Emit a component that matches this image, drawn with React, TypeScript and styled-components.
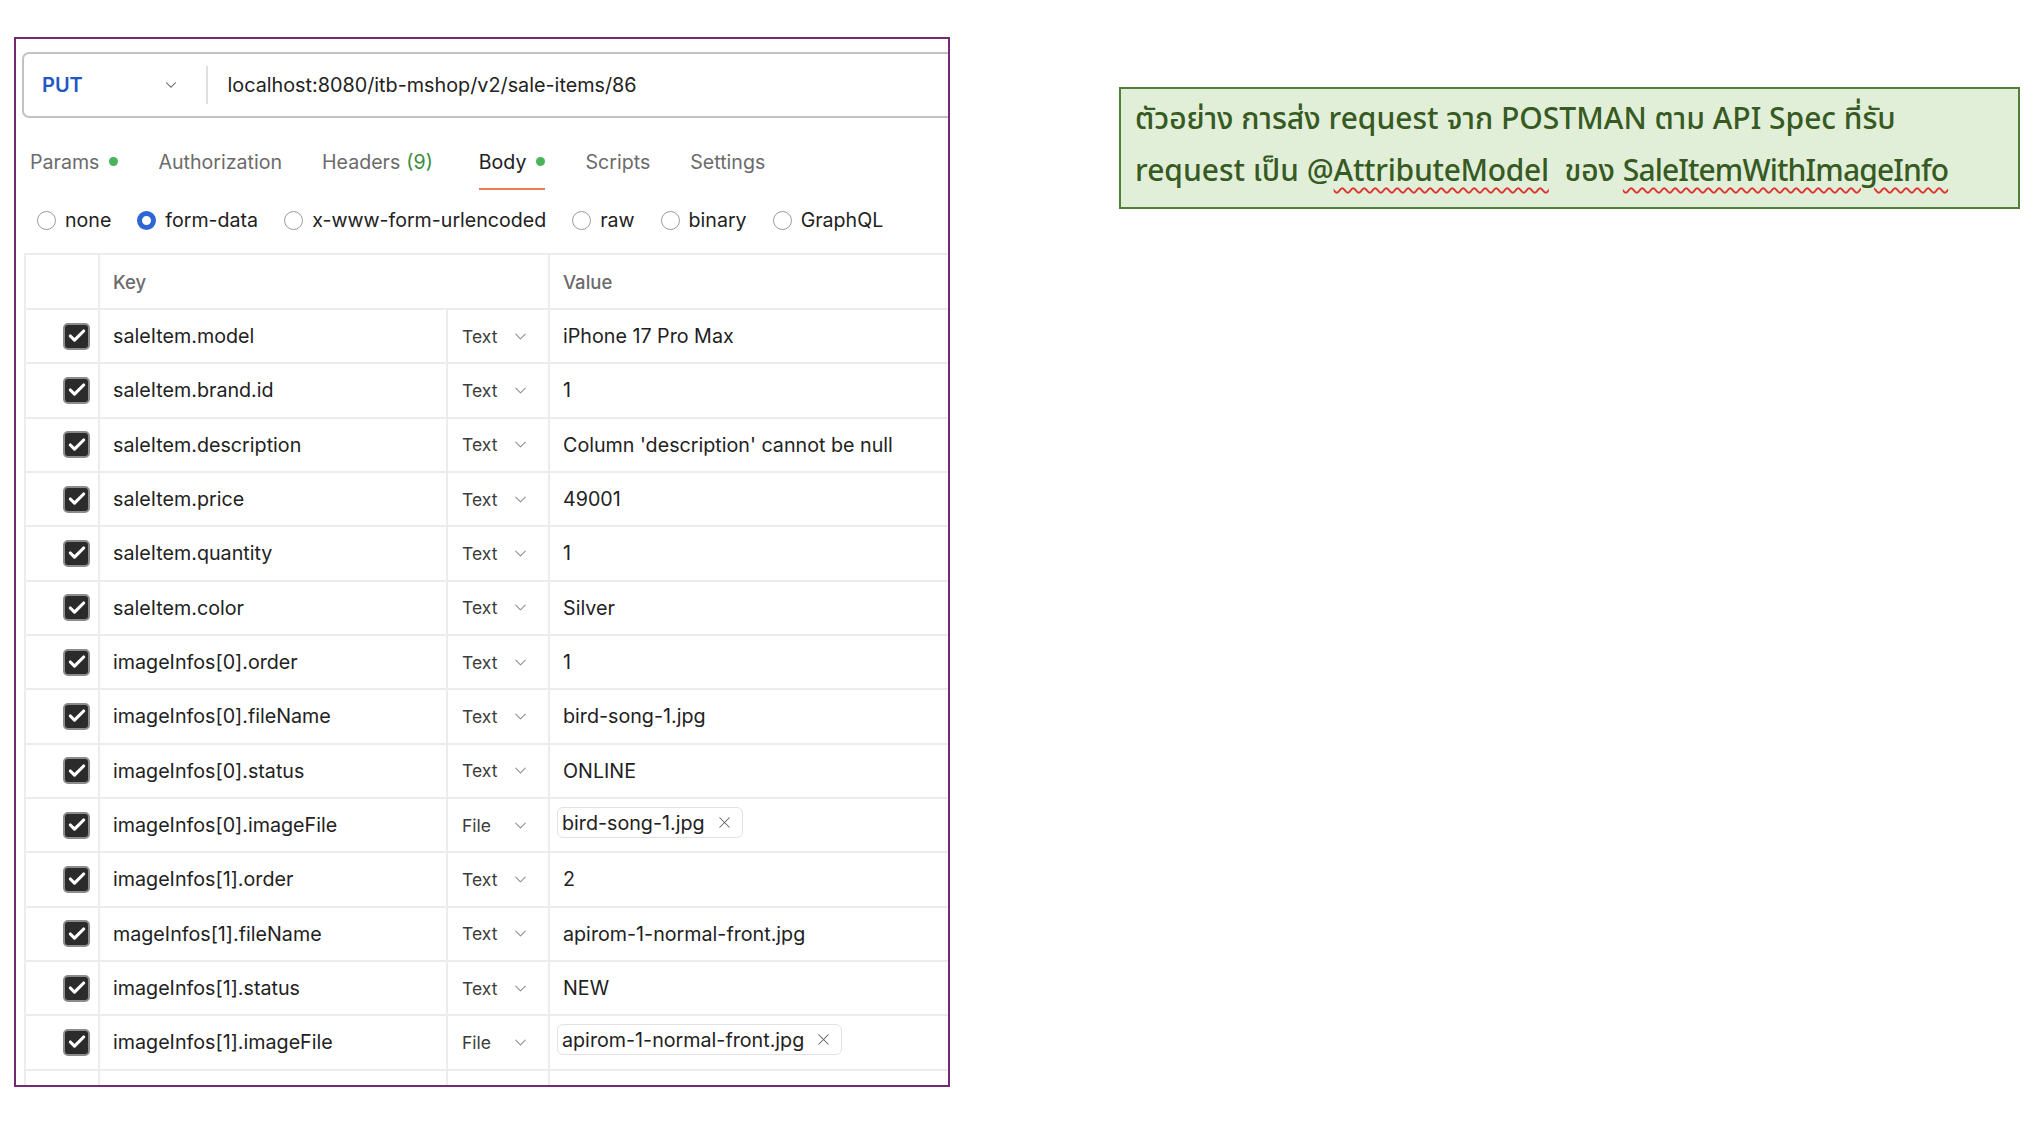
import React from 'react';
import styled, { createGlobalStyle } from 'styled-components';
import { ChevronDown, X, Check } from 'lucide-react';

type Field = { key: string; type: 'Text' | 'File'; value: string };

const FIELDS: Field[] = [
  { key: 'saleItem.model', type: 'Text', value: 'iPhone 17 Pro Max' },
  { key: 'saleItem.brand.id', type: 'Text', value: '1' },
  { key: 'saleItem.description', type: 'Text', value: "Column 'description' cannot be null" },
  { key: 'saleItem.price', type: 'Text', value: '49001' },
  { key: 'saleItem.quantity', type: 'Text', value: '1' },
  { key: 'saleItem.color', type: 'Text', value: 'Silver' },
  { key: 'imageInfos[0].order', type: 'Text', value: '1' },
  { key: 'imageInfos[0].fileName', type: 'Text', value: 'bird-song-1.jpg' },
  { key: 'imageInfos[0].status', type: 'Text', value: 'ONLINE' },
  { key: 'imageInfos[0].imageFile', type: 'File', value: 'bird-song-1.jpg' },
  { key: 'imageInfos[1].order', type: 'Text', value: '2' },
  { key: 'mageInfos[1].fileName', type: 'Text', value: 'apirom-1-normal-front.jpg' },
  { key: 'imageInfos[1].status', type: 'Text', value: 'NEW' },
  { key: 'imageInfos[1].imageFile', type: 'File', value: 'apirom-1-normal-front.jpg' },
];

const TABS = [
  { label: 'Params', dot: true },
  { label: 'Authorization' },
  { label: 'Headers', count: '(9)' },
  { label: 'Body', dot: true, active: true },
  { label: 'Scripts' },
  { label: 'Settings' },
];

const BODY_TYPES = ['none', 'form-data', 'x-www-form-urlencoded', 'raw', 'binary', 'GraphQL'];

const App: React.FC = () => {
  return (
    <>
      <GlobalStyle />
      <Page>
        <Frame>
          <UrlBar>
            <Method>
              <MethodName>PUT</MethodName>
              <ChevronDown size={18} strokeWidth={1.4} color="#555" />
            </Method>
            <UrlDivider />
            <UrlText>localhost:8080/itb-mshop/v2/sale-items/86</UrlText>
          </UrlBar>

          <Tabs>
            {TABS.map((t) => (
              <Tab key={t.label} $active={!!t.active}>
                {t.label}
                {t.count && <Count>{t.count}</Count>}
                {t.dot && <Dot />}
              </Tab>
            ))}
          </Tabs>

          <RadioRow>
            {BODY_TYPES.map((b) => (
              <RadioItem key={b}>
                <Radio $checked={b === 'form-data'} />
                {b}
              </RadioItem>
            ))}
          </RadioRow>

          <Table>
            <HeadRow>
              <Cell />
              <HeadCell>Key</HeadCell>
              <HeadCell>Value</HeadCell>
            </HeadRow>
            {FIELDS.map((f) => (
              <Row key={f.key}>
                <CheckCell>
                  <CheckBox>
                    <Check size={20} strokeWidth={3.8} color="#fff" />
                  </CheckBox>
                </CheckCell>
                <KeyCell>{f.key}</KeyCell>
                <TypeCell>
                  {f.type}
                  <ChevronDown size={19} strokeWidth={1.3} color="#8e8e8e" />
                </TypeCell>
                {f.type === 'File' ? (
                  <ValueCell $file>
                    <FileChip>
                      {f.value}
                      <X size={19} strokeWidth={1.3} color="#5e5e5e" />
                    </FileChip>
                  </ValueCell>
                ) : (
                  <ValueCell>{f.value}</ValueCell>
                )}
              </Row>
            ))}
            <Row>
              <CheckCell />
              <KeyCell />
              <TypeCell />
              <ValueCell />
            </Row>
          </Table>
        </Frame>

        <Note>
          <NoteLine>ตัวอย่าง การส่ง request จาก POSTMAN ตาม API Spec ที่รับ</NoteLine>
          <NoteLine>
            request เป็น @<Squiggle>AttributeModel</Squiggle>&nbsp;&nbsp;ของ{' '}
            <Squiggle $tight>SaleItemWithImageInfo</Squiggle>
          </NoteLine>
        </Note>
      </Page>
    </>
  );
};

const GlobalStyle = createGlobalStyle`
  html, body { margin: 0; padding: 0; background: #fff; }
  body { font-family: Inter, "Liberation Sans", sans-serif; color: #212121; }
`;

const Page = styled.div`
  display: flex;
  align-items: flex-start;
  padding: 37px 0 0 14px;
`;

const Frame = styled.div`
  width: 936px;
  height: 1050px;
  box-sizing: border-box;
  border: 2.5px solid #732a70;
  overflow: hidden;
  display: flex;
  flex-direction: column;
`;

const UrlBar = styled.div`
  margin: 13px 0 0 6px;
  width: 1100px;
  height: 66px;
  flex-shrink: 0;
  box-sizing: border-box;
  border: 2px solid #c2c2c2;
  border-radius: 7px;
  display: flex;
  align-items: center;
`;

const Method = styled.div`
  width: 182px;
  box-sizing: border-box;
  padding: 0 26px 0 18px;
  display: flex;
  align-items: center;
  justify-content: space-between;
`;

const MethodName = styled.span`
  color: #2456c4;
  font-weight: 600;
  font-size: 20px;
`;

const UrlDivider = styled.div`
  width: 1.5px;
  height: 38px;
  background: #e0e0e0;
`;

const UrlText = styled.span`
  padding-left: 20px;
  font-size: 19.8px;
  color: #222;
`;

const Tabs = styled.div`
  display: flex;
  gap: 40px;
  margin: 16px 0 0 14px;
  height: 56px;
  flex-shrink: 0;
`;

const Tab = styled.div<{ $active: boolean }>`
  display: flex;
  align-items: center;
  gap: 10px;
  box-sizing: border-box;
  font-size: 19.6px;
  color: ${(p) => (p.$active ? '#212121' : '#6b6b6b')};
  border-bottom: 2.5px solid ${(p) => (p.$active ? '#ee7a55' : 'transparent')};
  margin-left: ${(p) => (p.$active ? '6px' : '0')};
  padding-top: 1px;
`;

const Count = styled.span`
  color: #3b8a3e;
  margin-left: -4px;
`;

const Dot = styled.span`
  width: 9px;
  height: 9px;
  border-radius: 50%;
  background: #4bb35c;
`;

const RadioRow = styled.div`
  display: flex;
  align-items: center;
  gap: 26px;
  margin: 0 0 3px 21px;
  height: 60px;
  flex-shrink: 0;
`;

const RadioItem = styled.label`
  display: flex;
  align-items: center;
  gap: 9px;
  font-size: 19.6px;
  color: #222;
`;

const Radio = styled.span<{ $checked: boolean }>`
  width: 19px;
  height: 19px;
  box-sizing: border-box;
  border-radius: 50%;
  border: ${(p) => (p.$checked ? '5.5px solid #2c67d3' : '1.5px solid #9a9a9a')};
  background: #fff;
`;

const Table = styled.div`
  margin-left: 8px;
  width: 1100px;
  border-left: 2px solid #ececec;
  border-top: 2px solid #ececec;
`;

const HeadRow = styled.div`
  display: grid;
  grid-template-columns: 74px 450px 1fr;
  height: 53px;
  border-bottom: 2px solid #ececec;
`;

const Row = styled.div`
  display: grid;
  grid-template-columns: 74px 348px 102px 1fr;
  height: 54.33px;
  box-sizing: border-box;
  border-bottom: 2px solid #ececec;
`;

const Cell = styled.div`
  display: flex;
  align-items: center;
  border-right: 2px solid #ececec;
  min-width: 0;
`;

const HeadCell = styled(Cell)`
  padding-left: 13px;
  font-size: 18.5px;
  font-weight: 500;
  color: #6b6b6b;
`;

const CheckCell = styled(Cell)`
  justify-content: flex-end;
  padding-right: 8px;
`;

const CheckBox = styled.span`
  width: 27px;
  height: 27px;
  box-sizing: border-box;
  border-radius: 5px;
  background: #2b2b2b;
  border: 2px solid #8c8c8c;
  display: flex;
  align-items: center;
  justify-content: center;
`;

const KeyCell = styled(Cell)`
  padding-left: 13px;
  font-size: 19.7px;
  color: #222;
  white-space: nowrap;
`;

const TypeCell = styled(Cell)`
  padding: 0 18px 0 14px;
  justify-content: space-between;
  font-size: 17.5px;
  color: #3c3c3c;
`;

const ValueCell = styled(Cell)<{ $file?: boolean }>`
  padding-left: ${(p) => (p.$file ? '7px' : '13px')};
  font-size: 19.7px;
  color: #222;
  white-space: nowrap;
  border-right: none;
`;

const FileChip = styled.span`
  display: inline-flex;
  align-items: center;
  gap: 10px;
  height: 31px;
  margin-top: -5px;
  box-sizing: border-box;
  padding: 0 8px 0 4px;
  border: 1.5px solid #e2e2e2;
  border-radius: 6px;
`;

const Note = styled.div`
  margin: 50px 0 0 169px;
  width: 901px;
  height: 122px;
  box-sizing: border-box;
  border: 2.5px solid #4f7f3a;
  background: #e1efd8;
  padding: 5px 14px 0;
  color: #375a23;
  font-family: "Noto Sans Thai", "Noto Sans", "DejaVu Sans", sans-serif;
  font-size: 30px;
  font-weight: 500;
`;

const NoteLine = styled.div`
  line-height: 52px;
  white-space: nowrap;
`;

const Squiggle = styled.span<{ $tight?: boolean }>`
  letter-spacing: ${(p) => (p.$tight ? '-0.9px' : '-0.3px')};
  text-decoration: underline wavy #e0322f;
  text-decoration-thickness: 1.5px;
  text-underline-offset: 6px;
`;

export default App;
